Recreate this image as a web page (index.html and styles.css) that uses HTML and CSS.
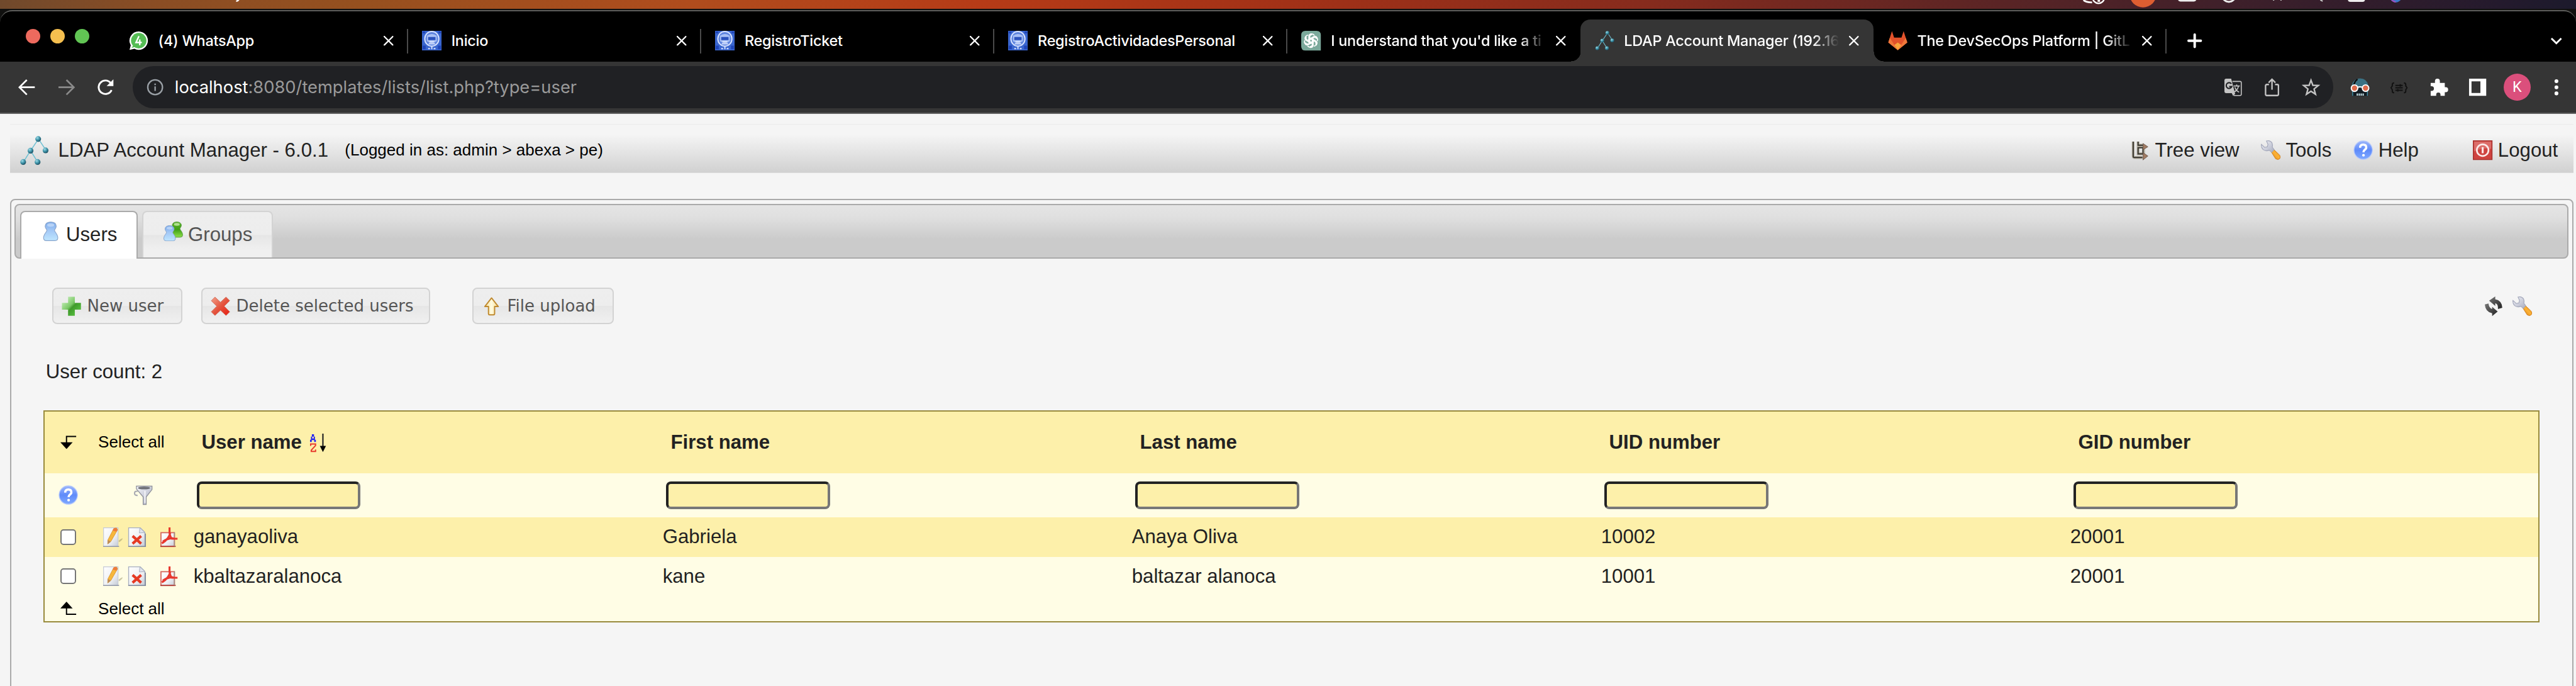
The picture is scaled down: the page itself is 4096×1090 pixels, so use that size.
FILE: index.html
```html
<!DOCTYPE html>
<html lang="en">
<head>
<meta charset="utf-8">
<title>LDAP Account Manager</title>
<link rel="stylesheet" href="styles.css">
</head>
<body>
<svg class="defs" aria-hidden="true">
  <defs>
    <radialGradient id="g-node" cx=".35" cy=".3" r=".8"><stop offset="0" stop-color="#9fdce8"/><stop offset=".5" stop-color="#3c91a6"/><stop offset="1" stop-color="#173f50"/></radialGradient>
    <linearGradient id="g-blue" x1="0" y1="0" x2="0" y2="1"><stop offset="0" stop-color="#7aa9ea"/><stop offset=".45" stop-color="#a3c8f6"/><stop offset="1" stop-color="#bfe6ff"/></linearGradient>
    <linearGradient id="g-green" x1="0" y1="0" x2="0" y2="1"><stop offset="0" stop-color="#5cb32c"/><stop offset=".5" stop-color="#3fa016"/><stop offset="1" stop-color="#8fe04a"/></linearGradient>
    <linearGradient id="g-plus" x1="0" y1="0" x2="1" y2="1"><stop offset="0" stop-color="#d9f7cf"/><stop offset=".45" stop-color="#7cc968"/><stop offset=".55" stop-color="#3f9a2b"/><stop offset="1" stop-color="#63d04a"/></linearGradient>
    <linearGradient id="g-red" x1="0" y1="0" x2="1" y2="1"><stop offset="0" stop-color="#f3a08a"/><stop offset=".5" stop-color="#e4553f"/><stop offset="1" stop-color="#e81c10"/></linearGradient>
    <linearGradient id="g-up" x1="0" y1="0" x2="1" y2="0"><stop offset="0" stop-color="#f7df95"/><stop offset=".5" stop-color="#fffbe0"/><stop offset="1" stop-color="#f5d98a"/></linearGradient>
    <linearGradient id="g-page" x1="0" y1="0" x2="1" y2="1"><stop offset="0" stop-color="#fff"/><stop offset=".6" stop-color="#eef0f4"/><stop offset="1" stop-color="#c3c9d4"/></linearGradient>
    <linearGradient id="g-help" x1="0" y1="0" x2="0" y2="1"><stop offset="0" stop-color="#9db7fb"/><stop offset=".5" stop-color="#5f8bfa"/><stop offset="1" stop-color="#7fa9ff"/></linearGradient>
    <linearGradient id="g-steel" x1="0" y1="0" x2="1" y2="1"><stop offset="0" stop-color="#f4f5fa"/><stop offset="1" stop-color="#a9adc0"/></linearGradient>
    <linearGradient id="g-orange" x1="0" y1="1" x2="1" y2="0"><stop offset="0" stop-color="#d9780c"/><stop offset=".5" stop-color="#fbb237"/><stop offset="1" stop-color="#e98a12"/></linearGradient>
    <linearGradient id="g-dark" x1="0" y1="0" x2="1" y2="1"><stop offset="0" stop-color="#777"/><stop offset="1" stop-color="#222"/></linearGradient>
    <symbol id="i-tree" viewBox="0 0 48 48">
      <path d="M31 5 18 24 6 43M31 5l12 18M18 24l12 19" fill="none" stroke="#6fc0d2" stroke-width="1.6"/>
      <g fill="url(#g-node)"><circle cx="30.500" cy="5" r="4.700"/><circle cx="18" cy="24" r="4.700"/><circle cx="42.500" cy="23.500" r="4.700"/><circle cx="6" cy="42.500" r="4.700"/><circle cx="29.500" cy="42.500" r="4.700"/></g>
    </symbol>
    <symbol id="i-blueicon" viewBox="0 0 32 32">
      <path fill="#3a66cf" d="M0 0h32v32H0z"/>
      <path d="M1 1h4v3H1zM27 1h4v3h-4zM1 24h5v6H1zM26 24h5v6h-5z" fill="#1f45b8"/>
      <ellipse cx="16" cy="13" rx="11.500" ry="12" fill="#5d83de" stroke="#d6e2ff" stroke-width="2"/>
      <path d="M8 8q8-6 16 0v9q-8 5-16 0z" fill="#a9c0f4"/>
      <path d="M10 10h12v5H10z" fill="#2b52bd"/>
      <path d="M12 18h8M11 21h10M16 25v5M10 29h3M19 29h3" stroke="#dbe5ff" stroke-width="2"/>
    </symbol>
    <symbol id="i-x" viewBox="0 0 16 16"><path d="m1 1 14 14M15 1 1 15" stroke="#fff" stroke-width="2.300" stroke-linecap="round"/></symbol>
    <symbol id="i-helpc" viewBox="0 0 32 32">
      <circle cx="16" cy="16" r="15" fill="url(#g-help)" stroke="#b9cbfb" stroke-width="1.300"/>
      <path d="M11 12q0-5 5-5t5 4.500q0 2.500-2.600 4Q16.500 17 16.500 19.500" fill="none" stroke="#fff" stroke-width="3.600"/>
      <circle cx="16.500" cy="24.300" r="2.200" fill="#fff"/>
    </symbol>
    <symbol id="i-wrench" viewBox="0 0 32 32">
      <path d="m17 19 4-4 9.500 9q2.500 3.500 0 6t-6.500 0z" fill="url(#g-orange)" stroke="#cf7d1d" stroke-width="1"/>
      <path d="M9 1q6-1.500 9 3 1.500 3.500.5 7l3 4-4 4.500-4-3.500Q8 18.500 3.500 15 0 11.500.8 6.500L6 11.500l4.500-1 1-4z" fill="url(#g-steel)" stroke="#a4a8bb" stroke-width="1.200"/>
    </symbol>
    <path id="person" d="M16 .8c5.500 0 9 2.600 9 6.900 0 3-2.800 4.800-2.800 6.600 0 2.700 5.400 6 5.400 12.200q0 4.700-4.600 4.700H9q-4.600 0-4.600-4.700c0-6.200 5.400-9.500 5.400-12.200 0-1.800-2.800-3.600-2.800-6.600C7 3.400 10.500.8 16 .8z"/>
    <symbol id="i-user" viewBox="0 0 32 32">
      <use href="#person" fill="url(#g-blue)" stroke="#8aa5cb" stroke-width="1.200"/>
      <path d="M10.500 4q5.500-2.500 11 0v3.500q-5.500 2-11 0z" fill="#d5e6fc" opacity=".6"/>
    </symbol>
    <symbol id="i-groups" viewBox="0 0 32 32">
      <g transform="translate(8.600 0) scale(.82)"><use href="#person" fill="url(#g-green)" stroke="#5b9c45" stroke-width="1.200"/><path d="M10.500 4q5.500-2.500 11 0v3.500q-5.500 2-11 0z" fill="#d9f5bd" opacity=".7"/></g>
      <g transform="translate(-3.200 6) scale(.82)"><use href="#person" fill="url(#g-blue)" stroke="#8aa5cb" stroke-width="1.200"/><path d="M10.500 4q5.500-2.500 11 0v3.500q-5.500 2-11 0z" fill="#d5e6fc" opacity=".6"/></g>
    </symbol>
    <symbol id="i-edit" viewBox="0 0 32 32">
      <path d="M25 22q5-5 7-4-1 3-6 6z" fill="#9a9468" opacity=".5"/>
      <path d="M.7.700h23.600v30.600H.7z" fill="url(#g-page)" stroke="#c5c9d6" stroke-width="1.200"/>
      <path d="M0 31h26" stroke="#8f96a6" stroke-width="1.600"/>
      <path d="M17.500 1.500 22 1l1.500 3-11 19-5 4 .2-6.500z" fill="#f6b73c" stroke="#d58f25" stroke-width=".8"/>
      <path d="m17 2 4-1.500 2.500 3L21.500 7l-6-2z" fill="#ef7b3c"/>
      <path d="m7.700 20.500 4.800 2.500-5 4.500z" fill="#b98b5c"/>
    </symbol>
    <symbol id="i-del" viewBox="0 0 32 32">
      <path d="M2.600.700h19L29 8v23.300H2.600z" fill="url(#g-page)" stroke="#a8afc0" stroke-width="1.400"/>
      <path d="M21 .700 20 9l9-.5z" fill="#dfe3ec" stroke="#a8afc0"/>
      <path d="M2 31h28V10" fill="none" stroke="#7f889b" stroke-width="1.600"/>
      <path d="m9 14 14 12.500M23 14 9 26.500" stroke="#e53a24" stroke-width="4.400"/>
    </symbol>
    <symbol id="i-pdf" viewBox="0 0 32 32">
      <path d="M3 8.500h22v23H3z" fill="url(#g-page)" stroke="#d5655c" stroke-width="1.800"/>
      <path d="M2 31h25" stroke="#b23b34" stroke-width="2"/>
      <path d="M17 0v9q1 7 4 9.500h9M18 9q-1 9-13.500 17M6 23q9-6 18-5" fill="none" stroke="#e8382d" stroke-width="3.200"/>
      <path d="M25 8v8M25 21v10" stroke="#9c8f86" stroke-width="1.500"/>
    </symbol>
    <symbol id="i-turn" viewBox="0 0 26 22"><path d="M26 1.500H10V13" fill="none" stroke="#000" stroke-width="2"/><path d="M0 11h20L10 22z"/></symbol>
  </defs>
</svg>

<div class="menubar">
  <svg class="menubar-icons" viewBox="0 0 4200 16" preserveAspectRatio="none">
    <path d="M385 1.800q3.500 0 5-4" fill="none" stroke="#fff" stroke-width="2.500"/>
    <path d="M3397 0q4 4 14 4" fill="none" stroke="#fff" stroke-width="3"/>
    <circle cx="3421.500" cy="-4" r="9.500" fill="none" stroke="#fff" stroke-width="2.500"/><path d="M3420 0h4v3h-4z" fill="#fff"/>
    <circle cx="3494" cy="-10" r="22" fill="#de5e31"/>
    <rect x="3551" y="-10" width="30" height="12.500" rx="4" fill="#eee"/>
    <circle cx="3634" cy="-8" r="11" fill="none" stroke="#eee" stroke-width="3"/>
    <path d="M3706 0h2M3718 0h2M3783 0l4 2" stroke="#ccc" stroke-width="2"/>
    <rect x="3828" y="-10" width="28" height="13" rx="4" fill="#eee"/>
    <circle cx="3906" cy="-6" r="10" fill="#3a78c8"/><path d="M3898-2q4 5 8 5" fill="none" stroke="#a54ec0" stroke-width="2"/>
  </svg>
</div>

<div class="window">
  <div class="tabstrip">
    <div class="lights"><i class="red"></i><i class="yellow"></i><i class="green"></i></div>
    <div class="tab"><svg class="fav" viewBox="0 0 32 32"><path d="M16 1a15 15 0 1 1-7 28.300L1 31l2-7.500A15 15 0 0 1 16 1z" fill="#fff"/><circle cx="16" cy="16" r="12.600" fill="#55bd54"/><path d="M8.500 22 4 28l7-2z" fill="#55bd54"/><path d="M16 9.500 11.500 19H20M17.700 15v7.500" fill="none" stroke="#fff" stroke-width="2.400" stroke-linecap="round"/></svg><span class="title">(4) WhatsApp</span><svg class="close"><use href="#i-x"/></svg></div>
    <div class="tab"><svg class="fav"><use href="#i-blueicon"/></svg><span class="title">Inicio</span><svg class="close"><use href="#i-x"/></svg></div>
    <div class="tab"><svg class="fav"><use href="#i-blueicon"/></svg><span class="title">RegistroTicket</span><svg class="close"><use href="#i-x"/></svg></div>
    <div class="tab"><svg class="fav"><use href="#i-blueicon"/></svg><span class="title">RegistroActividadesPersonal</span><svg class="close"><use href="#i-x"/></svg></div>
    <div class="tab nosep"><svg class="fav" viewBox="0 0 32 32"><path d="M7 0h18q7 0 7 7v25H7q-7 0-7-7V7q0-7 7-7z" fill="#7ba99b"/><g fill="none" stroke="#fff" stroke-width="1.700"><path id="petal" d="M12.500 19.500V9.800q0-4.800 4.500-4.800 3 0 4.600 2.600M12.500 15.500l7-4.200q4-2 6 1.500"/><use href="#petal" transform="rotate(60 16 16)"/><use href="#petal" transform="rotate(120 16 16)"/><use href="#petal" transform="rotate(180 16 16)"/><use href="#petal" transform="rotate(240 16 16)"/><use href="#petal" transform="rotate(300 16 16)"/></g></svg><span class="title fade">I understand that you'd like a ti</span><svg class="close"><use href="#i-x"/></svg></div>
    <div class="tab active"><svg class="fav"><use href="#i-tree"/></svg><span class="title fade">LDAP Account Manager (192.16</span><svg class="close"><use href="#i-x"/></svg></div>
    <div class="tab"><svg class="fav" viewBox="0 0 32 32"><path d="M6.500.500 10 11h12L25.500.500 31.500 19 16 31.500.500 19z" fill="#e2522b"/><path d="M.5 19 3 11.500 16 31.500 29 11.500 31.500 19 16 31.500z" fill="#f0773a"/><path d="m10.500 23 5.500-4 5.500 4-5.500 8.500z" fill="#f9a63c"/></svg><span class="title fade">The DevSecOps Platform | GitL</span><svg class="close"><use href="#i-x"/></svg></div>
    <svg class="plus" viewBox="0 0 24 24"><path d="M12 2v20M2 12h20" stroke="#fff" stroke-width="4" stroke-linecap="round"/></svg>
    <svg class="chev" viewBox="0 0 20 12"><path d="m2 2 8 8 8-8" fill="none" stroke="#fff" stroke-width="3"/></svg>
  </div>

  <div class="toolbar">
    <svg class="nav" viewBox="0 0 28 28"><path d="M27 14H3M14 2 2 14l12 12" fill="none" stroke="#fff" stroke-width="2.800"/></svg>
    <svg class="nav" viewBox="0 0 28 28"><path d="M1 14h24M14 2l12 12-12 12" fill="none" stroke="#8a8a8a" stroke-width="2.800"/></svg>
    <svg class="nav" viewBox="0 0 28 28"><path d="M24 18.500A11 11 0 1 1 22.500 7" fill="none" stroke="#fff" stroke-width="3"/><path d="M27 1v11H16z" fill="#fff"/></svg>
    <div class="omnibox">
      <svg class="info" viewBox="0 0 28 28"><circle cx="14" cy="14" r="12" fill="none" stroke="#9aa0a6" stroke-width="2.400"/><path d="M14 12.500v7.500M14 8v2.500" stroke="#9aa0a6" stroke-width="2.400"/></svg>
      <span class="url"><em>localhost</em>:8080/templates/lists/list.php?type=user</span>
      <svg class="oi" viewBox="0 0 30 30"><path d="M14 5.500h12.500q2 0 2 2v19q0 2-2 2H16" fill="none" stroke="#c4c4c4" stroke-width="1.600"/><path d="M4 1h8l6.500 25L15 29l-2-4.500H4q-3 0-3-3V4q0-3 3-3z" fill="#c4c4c4"/><path d="M12.300 9.300A4.700 4.700 0 1 0 13 14H8.800" fill="none" stroke="#202124" stroke-width="2.200"/><path d="M16 13h10M21 10.500V13M24 13q-1 6-6.500 9.500M18 15q2 6 7 8" fill="none" stroke="#c4c4c4" stroke-width="1.700"/></svg>
      <svg class="oi" viewBox="0 0 30 30"><path d="M10 10.500H6.500q-2 0-2 2v14q0 2 2 2h17q2 0 2-2v-14q0-2-2-2H20M15 19V3M9.500 7.500 15 2l5.500 5.500" fill="none" stroke="#c4c4c4" stroke-width="2.400"/></svg>
      <svg class="oi" viewBox="0 0 30 30"><path d="m15 3.500 3 8.300 9 .4-7 5.600 2.400 8.700L15 21.500l-7.400 5 2.400-8.700-7-5.600 9-.4z" fill="none" stroke="#c4c4c4" stroke-width="2.400"/></svg>
    </div>
    <svg class="ext" viewBox="0 0 32 32"><path d="M2.500 13Q5 1.500 16 1.500T29.500 13v4h-27z" fill="#3a7183"/><path d="M6 12Q8 5 12 3" stroke="#111" stroke-width="2.500" fill="none"/><path d="M3.500 18h25v12h-25z" fill="#111b22"/><path d="M4 20v10M28 20v10" stroke="#3f8ea6" stroke-width="1.500"/><path d="M10.500 28h12" stroke="#cfe9ef" stroke-width="3.500" stroke-dasharray="2 1.200"/><g fill="#de6b4c" stroke="#fff" stroke-width="2"><circle cx="7" cy="17.500" r="5.300"/><circle cx="25" cy="17.500" r="5.300"/></g><path d="M12 16q4-1.500 8 0" stroke="#fff" stroke-width="2" fill="none"/></svg>
    <svg class="ext" viewBox="0 0 32 32"><path d="M8 9q-3 0-3 3v2l-2 3 2 3v2q0 3 3 3M24 9q3 0 3 3v2l2 3-2 3v2q0 3-3 3M10 13h12M10 17h12M10 21h12M18 11v4M14 19v4" fill="none" stroke="#111" stroke-width="2"/></svg>
    <svg class="ext" viewBox="0 0 32 32"><path d="M3 9h7V6a4 4 0 0 1 8 0v3h8v7h1.500a4 4 0 0 1 0 8H26v6h-7v-2a3.500 3.500 0 0 0-7 0v2H3v-8h1.500a3.800 3.800 0 0 0 0-7.600H3z" fill="#fff"/></svg>
    <svg class="ext" viewBox="0 0 32 32"><path d="M2 2h28v28H2zM6 6.500v19h14.500v-19z" fill="#fff" fill-rule="evenodd"/></svg>
    <span class="avatar">K</span>
    <svg class="dots" viewBox="0 0 8 28"><g fill="#fff"><circle cx="4" cy="4" r="3.100"/><circle cx="4" cy="14" r="3.100"/><circle cx="4" cy="24" r="3.100"/></g></svg>
  </div>

  <div class="page">
    <header class="head">
      <svg class="logo"><use href="#i-tree"/></svg>
      <span class="brand">LDAP Account Manager - 6.0.1</span>
      <span class="logged">(Logged in as: admin &gt; abexa &gt; pe)</span>
      <nav class="menu">
        <a class="w1"><svg class="ic" viewBox="0 0 32 32"><path d="M4 2v24q0 2 2 2h13M12 2v6h8M12 8v14h9V10h-9" fill="none" stroke="#b5afa0" stroke-width="4.500"/><path d="M4 2v24q0 2 2 2h13M12 2v6h8M12 12v10h8V12z" fill="none" stroke="#39362f" stroke-width="2"/><path d="m20 5 8 5.500-8 5zM20 20l8 5.500-8 6.500z" fill="#a07a62" stroke="#5d4d42" stroke-width=".8"/></svg><span>Tree view</span></a>
        <a class="w2"><svg class="ic"><use href="#i-wrench"/></svg><span>Tools</span></a>
        <a class="w3"><svg class="ic"><use href="#i-helpc"/></svg><span>Help</span></a>
        <a><svg class="ic" viewBox="0 0 32 32"><path d="M.8.800h30.400v30.400H.8z" fill="#cf4340" stroke="#a8332f" stroke-width="1.600"/><path d="M2 2h28v12q-14-3-28 4z" fill="#e58a86" opacity=".6"/><circle cx="16" cy="16" r="9.500" fill="none" stroke="#fbe9e8" stroke-width="2.800"/><path d="M16 11v10" stroke="#fbe9e8" stroke-width="3.200"/></svg><span>Logout</span></a>
      </nav>
    </header>

    <main class="panel">
      <div class="tabs">
        <a class="ptab on"><svg class="ic"><use href="#i-user"/></svg><span>Users</span></a>
        <a class="ptab"><svg class="ic"><use href="#i-groups"/></svg><span>Groups</span></a>
      </div>
      <div class="content">
        <div class="actions">
          <button class="btn b1"><svg class="ic" viewBox="0 0 32 32"><path d="M10.500.500h11v10h10v11h-10v10h-11v-10H.500v-11h10z" fill="url(#g-plus)"/></svg><span>New user</span></button>
          <button class="btn b2"><svg class="ic" viewBox="0 0 32 32"><path d="m1 7 6-6 9 8.500L25 1l6 6-9 9 9 9-6 6-9-8.500L7 31l-6-6 9-9z" fill="url(#g-red)" stroke="#c9604e" stroke-width=".8"/></svg><span>Delete selected users</span></button>
          <button class="btn b3"><svg class="ic" viewBox="0 0 32 32"><path d="M16 2.500 27 16.500h-6V28q0 2-2 2h-6q-2 0-2-2V16.500H5z" fill="url(#g-up)" stroke="#c08a30" stroke-width="2" stroke-linejoin="round"/></svg><span>File upload</span></button>
          <div class="tools">
            <svg class="ic" viewBox="0 0 32 32"><g fill="url(#g-dark)"><path d="M8 7 18 0v4.500q11 2 11.500 14l-7 2Q23 12 18 11v4.500z"/><path d="M22 24.500 13 32v-4.500Q2 25 1 13l6-1.500Q8 19 13 20.500V17z"/></g></svg>
            <svg class="ic"><use href="#i-wrench"/></svg>
          </div>
        </div>
        <p class="count">User count: 2</p>
        <div class="grid">
          <div class="row hd">
            <span class="c0"><svg class="turn"><use href="#i-turn"/></svg></span><span class="sel">Select all</span>
            <span class="th"><span>User name</span><svg class="sort" viewBox="0 0 28 32"><path d="M1 14.500V11h1.500V6H4V2h3.500v4H9v5h1.500v3.500H7.800v-3H3.800v3zM4.600 9h2.400V6H4.600z" fill="#2323f0" fill-rule="evenodd"/><path d="M2 21v-3h8v2.500L3 28v2h7v-3" fill="none" stroke="#e8392c" stroke-width="2"/><path d="M22 1v22" stroke="#222" stroke-width="2.200"/><path d="M17 21h10l-5 10z"/></svg></span>
            <span class="th">First name</span><span class="th">Last name</span><span class="th">UID number</span><span class="th">GID number</span>
          </div>
          <div class="row flt">
            <span class="c0"><svg class="ic"><use href="#i-helpc"/></svg></span>
            <span class="fun"><svg class="ic" viewBox="0 0 32 32"><path d="M7 10q-5-1-5 3t5 3.500" fill="none" stroke="#a9abb3" stroke-width="2.200"/><path d="M5 1.500h25.500V7L21 19v12.500h-5V19L5 6z" fill="url(#g-steel)" stroke="#8e9099" stroke-width="1.300"/><ellipse cx="17.500" cy="4.500" rx="10" ry="2.200" fill="#6f7078"/><path d="M19 9v20" stroke="#fff" stroke-width="1.600"/></svg></span>
            <span><input></span><span><input></span><span><input></span><span><input></span><span><input></span>
          </div>
          <div class="row odd">
            <span class="c0"><i class="cb"></i></span><span class="acts"><svg class="ic"><use href="#i-edit"/></svg><svg class="ic"><use href="#i-del"/></svg><svg class="ic"><use href="#i-pdf"/></svg></span>
            <span class="td">ganayaoliva</span><span class="td">Gabriela</span><span class="td">Anaya Oliva</span><span class="td">10002</span><span class="td">20001</span>
          </div>
          <div class="row">
            <span class="c0"><i class="cb"></i></span><span class="acts"><svg class="ic"><use href="#i-edit"/></svg><svg class="ic"><use href="#i-del"/></svg><svg class="ic"><use href="#i-pdf"/></svg></span>
            <span class="td">kbaltazaralanoca</span><span class="td">kane</span><span class="td">baltazar alanoca</span><span class="td">10001</span><span class="td">20001</span>
          </div>
          <div class="row ft">
            <span class="c0"><svg class="turn flip"><use href="#i-turn"/></svg></span><span class="sel">Select all</span>
          </div>
        </div>
      </div>
    </main>
  </div>
</div>
</body>
</html>
```
FILE: styles.css
```css
/* 1rem equals 100 design units; the design is 42rem wide */
html { font-size: calc(100vw / 42); height: 100%; overflow: hidden; }
* { box-sizing: border-box; }
body { margin: 0; height: 100vh; overflow: hidden; background: #10100f; font: .32rem/1.15 "Liberation Sans", Arial, sans-serif; color: #222; display: flex; flex-direction: column; }
svg { display: block; flex: none; overflow: visible; }
.defs { position: absolute; width: 0; height: 0; }
.ic { width: .32rem; height: .32rem; }

.menubar { height: .14rem; flex: none; overflow: hidden; background: linear-gradient(90deg, #70492c 0, #8a4d24 6%, #96501f 14%, #b04c1d 27%, #b63b17 38%, #a23117 50%, #862b1d 64%, #5f2524 76%, #40202a 86%, #241a2d 97%, #1c1a2c 100%); }
.menubar-icons { width: 100%; height: .16rem; overflow: hidden; }

.window { flex: 1; min-height: 0; margin-top: .02rem; display: flex; flex-direction: column; border-top: 2px solid #5e5e5c; border-radius: .2rem .2rem 0 0; background: #000; overflow: hidden; }

.tabstrip { height: .82rem; flex: none; display: flex; align-items: flex-end; }
.lights { width: 1.87rem; height: 100%; padding: .29rem 0 0 .42rem; display: flex; gap: .16rem; }
.lights i { width: .24rem; height: .24rem; border-radius: 50%; }
.red { background: #ed6a5e; }
.yellow { background: #f5bf4f; }
.green { background: #61c554; }
.tab { width: 4.78rem; height: .68rem; flex: none; padding: 0 .24rem 0 .23rem; display: flex; align-items: center; position: relative; color: #fff; font: 500 .24rem/.3rem Inter, sans-serif; letter-spacing: -.0026rem; }
.tab::after { content: ""; position: absolute; right: 0; top: .15rem; width: 2px; height: .4rem; background: #4a4a4a; }
.nosep::after { display: none; }
.fav { width: .32rem; height: .32rem; margin-right: .16rem; }
.title { width: 3.5rem; overflow: hidden; white-space: nowrap; }
.fade { -webkit-mask-image: linear-gradient(90deg, #000 88%, transparent 100%); mask-image: linear-gradient(90deg, #000 88%, transparent 100%); }
.close { width: .16rem; height: .16rem; margin-left: auto; }
.active { background: #353535; border-radius: .16rem .16rem 0 0; }
.active::before, .active::after { content: ""; position: absolute; bottom: 0; top: auto; width: .16rem; height: .16rem; }
.active::before { left: -.16rem; background: radial-gradient(circle at 0 0, transparent .155rem, #353535 .16rem); }
.active::after { right: -.16rem; background: radial-gradient(circle at 100% 0, transparent .155rem, #353535 .16rem); }
.plus { width: .24rem; height: .24rem; margin: 0 0 .22rem .33rem; }
.chev { width: .2rem; height: .12rem; margin: 0 .22rem .28rem auto; }

.toolbar { height: .86rem; flex: none; background: #353535; border-bottom: 2px solid #606060; display: flex; align-items: center; padding: 0 .28rem 0 .3rem; }
.nav { width: .28rem; height: .28rem; margin-right: .36rem; }
.omnibox { width: 35.88rem; height: .68rem; border-radius: .34rem; background: #202124; display: flex; align-items: center; padding: 0 .21rem 0 .23rem; margin-left: -.06rem; }
.info { width: .28rem; height: .28rem; }
.url { margin: 0 auto 0 .18rem; font: .28rem/.36rem Inter, sans-serif; color: #9a9a9a; }
.url em { font-style: normal; color: #fff; }
.oi { width: .3rem; height: .3rem; margin-left: .335rem; }
.ext { width: .32rem; height: .32rem; margin-left: .32rem; }
.omnibox + .ext { margin-left: .28rem; }
.avatar { width: .44rem; height: .44rem; margin-left: .26rem; border-radius: 50%; background: #db4f7c; color: #fff; font: .24rem/.44rem Roboto, sans-serif; text-align: center; }
.dots { width: .08rem; height: .28rem; margin-left: auto; }

.page { flex: 1; min-height: 0; background: #f5f5f5; padding: .16rem .04rem 0 .16rem; }
.head { height: .8rem; border-top: 1px solid #ebebeb; background: linear-gradient(#f5f5f5 20%, #d1d1d1 98%, #e2e2e2 100%); display: flex; align-items: center; padding: .05rem 0 0 .16rem; white-space: nowrap; }
.logo { width: .48rem; height: .48rem; }
.brand { margin-left: .15rem; }
.logged { margin-left: .27rem; font-size: .2667rem; color: #000; }
.menu { width: 7.22rem; margin-left: auto; display: flex; }
.menu a { display: flex; align-items: center; gap: .087rem; }
.menu .w1 { width: 2.12rem; gap: .075rem; }
.w2 { width: 1.51rem; }
.w3 { width: 1.95rem; }

.panel { height: 9rem; margin-top: .42rem; border: 2px solid #aaa; border-radius: .08rem; padding: .06rem; }
.tabs { height: .89rem; border: 2px solid #aaa; border-radius: .08rem; background: linear-gradient(#e4e4e4 0, #e0e0e0 22%, #cbcbcb 65%, #cbcbcb 100%); padding: .09rem 0 0 .07rem; display: flex; gap: .07rem; }
.ptab { width: 2.13rem; height: .76rem; border: 2px solid #d3d3d3; border-bottom: 0; border-radius: .08rem .08rem 0 0; background: linear-gradient(#eee 0, #ededed 50%, #e6e6e6 51%, #f0f0f0 85%); color: #555; display: flex; gap: .085rem; padding-left: .32rem; line-height: .74rem; }
.ptab .ic { margin-top: .16rem; }
.on { width: 1.92rem; height: .78rem; background: #fff; border-color: #aaa; color: #222; }

.content { padding: .48rem .47rem 0; }
.actions { display: flex; height: .59rem; padding-left: .14rem; }
.btn { height: .59rem; border: 2px solid #d3d3d3; border-radius: .08rem; background: linear-gradient(#eee 0, #ededed 50%, #e6e6e6 51%, #f0f0f0 100%); color: #555; display: flex; align-items: center; gap: .1rem; padding: 0 0 0 .13rem; font: .2667rem/.32rem "DejaVu Sans", Verdana, sans-serif; white-space: nowrap; }
.b1 { width: 2.12rem; }
.b2 { width: 3.73rem; margin-left: .31rem; }
.b3 { width: 2.31rem; margin-left: .69rem; }
.tools { display: flex; align-items: center; gap: .14rem; margin-left: auto; padding-right: .13rem; }
.count { margin: .57rem 0 0 .035rem; height: .84rem; line-height: .4rem; }

.grid { border: 2px solid #988a3c; background: #fffde5; }
.row { height: .64rem; display: grid; grid-template-columns: .77rem 1.64rem repeat(5, 1fr); align-items: center; }
.hd { height: 1rem; background: #fdf0aa; font-weight: bold; }
.odd { background: #fdf0aa; }
.flt { height: .72rem; }
.ft { height: .41rem; }
.c0 { display: flex; justify-content: center; }
.turn { width: .26rem; height: .22rem; }
.flip { transform: scaleY(-1); }
.sel { font-size: .2667rem; font-weight: normal; color: #000; padding-left: .1rem; }
.ft .sel { padding-top: .03rem; }
.th { padding-left: .145rem; display: flex; align-items: center; gap: .12rem; }
.td { padding-left: .014rem; }
.sort { width: .28rem; height: .32rem; }
.fun { padding-left: .67rem; }
.acts { display: flex; padding-left: .18rem; }
.acts .ic + .ic { margin-left: .07rem; }
.acts .ic + .ic + .ic { margin-left: .2rem; }
.cb { width: .26rem; height: .26rem; border: 2px solid #767676; border-radius: .05rem; background: #fff; }
input { display: block; width: 2.67rem; height: .45rem; margin-left: .07rem; padding: 0; border: 4px solid; border-color: #222 #777 #777 #222; border-radius: .08rem; background: #fdf0aa; }
```
